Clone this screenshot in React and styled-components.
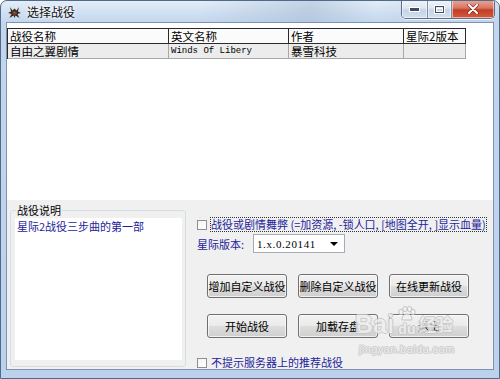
import React from "react";
import styled, { createGlobalStyle } from "styled-components";

const GlobalStyle = createGlobalStyle`
  html, body { margin: 0; padding: 0; background: #ffffff; }
  body { font-family: "Noto Sans CJK SC", "Noto Sans", sans-serif; }
  * { box-sizing: border-box; }
`;

const CJK = `"Noto Sans CJK SC", "Noto Sans", sans-serif`;

const Window = styled.div`
  position: relative;
  width: 500px;
  height: 379px;
  display: flex;
  flex-direction: column;
  border: 1px solid #4f6a8a;
  border-radius: 7px 7px 0 0;
  overflow: hidden;
  background: linear-gradient(
    180deg,
    #e4edf7 0px,
    #d3e2f3 10px,
    #c3d6ee 22px,
    #bcd1ec 100%
  );
`;

const TitleBar = styled.div`
  height: 21px;
  display: flex;
  align-items: flex-start;
  padding-left: 6px;
  background: linear-gradient(
    100deg,
    rgba(255, 255, 255, 0.0) 40%,
    rgba(160, 180, 205, 0.45) 62%,
    rgba(255, 255, 255, 0.0) 75%,
    rgba(190, 205, 225, 0.35) 85%
  );
`;

const AppIcon = styled.svg`
  margin-top: 4px;
  width: 15px;
  height: 14px;
  flex: none;
`;

const Title = styled.span`
  margin-left: 5px;
  margin-top: 3px;
  font-family: ${CJK};
  font-size: 12px;
  line-height: 16px;
  color: #111;
  text-shadow: 0 0 5px #fff, 0 0 3px #fff;
`;

const Caption = styled.div`
  margin-left: auto;
  margin-right: 4px;
  margin-top: -1px;
  display: flex;
  height: 19px;
  border: 1px solid #5a6e8a;
  border-top: none;
  border-radius: 0 0 5px 5px;
  overflow: hidden;
  box-shadow: 0 1px 0 rgba(255, 255, 255, 0.7);
`;

const CapBtn = styled.div`
  width: ${(p) => p.$w}px;
  height: 100%;
  display: flex;
  align-items: center;
  justify-content: center;
  border-left: ${(p) => (p.$first ? "none" : "1px solid #7b8ea8")};
  background: ${(p) =>
    p.$close
      ? "linear-gradient(180deg, #e9a99a 0%, #d9745f 45%, #c13f27 55%, #d35a3d 100%)"
      : "linear-gradient(180deg, #f1f5fa 0%, #dfe7f2 45%, #c6d4e6 55%, #d3e0ef 100%)"};
  box-shadow: inset 0 0 0 1px rgba(255, 255, 255, 0.55);
`;

const Client = styled.div`
  flex: 1;
  margin: 0 5px 8px 5px;
  border: 1px solid #7d93b0;
  background: #f0f0f0;
  display: flex;
  flex-direction: column;
`;

const ListView = styled.div`
  height: 177px;
  background: #ffffff;
  padding-top: 5px;
`;

const Grid = styled.div`
  display: grid;
  grid-template-columns: 161px 120px 115px 62px;
  width: max-content;
  border-left: 1px solid #2a2a2a;
  border-top: 1px solid #2a2a2a;
`;

const Cell = styled.div`
  height: 15px;
  padding: 0 2px;
  border-right: 1px solid ${(p) => (p.$head ? "#2a2a2a" : "#a8a8a8")};
  border-bottom: 1px solid ${(p) => (p.$head ? "#2a2a2a" : "#a8a8a8")};
  background: ${(p) => (p.$head ? "#fbfbfb" : "#ececec")};
  font-family: ${(p) => (p.$mono ? `"Liberation Mono", monospace` : CJK)};
  font-size: ${(p) => (p.$mono ? "9px" : "11.5px")};
  line-height: 14px;
  color: #000;
  white-space: nowrap;
`;

const Bottom = styled.div`
  flex: 1;
  display: flex;
`;

const Group = styled.fieldset`
  flex: none;
  margin: 3px 0 2px 3px;
  width: 176px;
  min-width: 0;
  padding: 1px 3px 6px 4px;
  border: 1px solid #d5dde5;
  border-radius: 3px;
  display: flex;
  flex-direction: column;
`;

const Legend = styled.legend`
  padding: 0 1px;
  margin-left: 1px;
  font-family: ${CJK};
  font-size: 11px;
  line-height: 14px;
  color: #000;
`;

const Memo = styled.div`
  flex: 1;
  background: #fff;
  padding: 1px 2px;
  font-family: ${CJK};
  font-size: 11px;
  line-height: 14px;
  color: #1c1c9a;
`;

const Side = styled.div`
  flex: 1;
  min-width: 0;
  padding-left: 11px;
  display: flex;
  flex-direction: column;
`;

const CheckRow = styled.label`
  display: flex;
  align-items: center;
  gap: 4px;
  margin-top: ${(p) => p.$top}px;
  height: 13px;
  font-family: ${CJK};
  font-size: 11px;
  line-height: 13px;
  color: #1c1c9a;
  white-space: nowrap;
`;

const Box = styled.span`
  width: 10px;
  height: 10px;
  flex: none;
  border: 1px solid #8e8f8f;
  background: linear-gradient(135deg, #f4f4f4, #ffffff);
`;

const Focus = styled.span`
  outline: 1px dotted #333;
  outline-offset: 0px;
`;

const VersionRow = styled.div`
  display: flex;
  align-items: center;
  margin-top: 3px;
  height: 19px;
`;

const Label = styled.span`
  font-family: ${CJK};
  font-size: 11px;
  color: #1c1c9a;
  width: 56px;
`;

const Combo = styled.div`
  width: 92px;
  height: 19px;
  border: 1px solid #a5acb5;
  background: #fff;
  display: flex;
  align-items: center;
  padding-left: 3px;
  font-family: "Liberation Serif", serif;
  font-size: 11px;
  letter-spacing: 0.6px;
  color: #000;
`;

const Arrow = styled.span`
  margin-left: auto;
  margin-right: 6px;
  width: 0;
  height: 0;
  border-left: 4px solid transparent;
  border-right: 4px solid transparent;
  border-top: 4px solid #000;
`;

const Buttons = styled.div`
  display: grid;
  grid-template-columns: repeat(3, 80px);
  grid-auto-rows: 24px;
  column-gap: 11px;
  row-gap: 16px;
  margin-top: 21px;
  margin-left: 10px;
`;

const Button = styled.button`
  margin: 0;
  padding: 0;
  border: 1px solid #707070;
  border-radius: 3px;
  background: linear-gradient(180deg, #f2f2f2 0%, #ebebeb 48%, #dddddd 52%, #cfcfcf 100%);
  box-shadow: inset 0 0 0 1px rgba(255, 255, 255, 0.7);
  font-family: ${CJK};
  font-size: 11px;
  white-space: nowrap;
  color: #000;
`;

const Watermark = styled.div`
  position: absolute;
  left: 354px;
  top: 294px;
  width: 120px;
  pointer-events: none;
  font-family: "Liberation Sans", sans-serif;
  color: #eeeeee;
  text-shadow: 1px 0 0 #c4c4c4, -1px 0 0 #c4c4c4, 0 1px 0 #c4c4c4, 0 -1px 0 #c4c4c4;
  opacity: 0.85;
`;

const WmTop = styled.div`
  display: flex;
  align-items: flex-end;
  height: 42px;
`;

const WmBai = styled.span`
  font-size: 25px;
  font-weight: bold;
  line-height: 26px;
`;

const WmDu = styled.span`
  display: flex;
  flex-direction: column;
  align-items: center;
  margin-left: 3px;
  font-size: 14px;
  font-weight: bold;
  line-height: 15px;
`;

const WmJy = styled.span`
  font-family: ${CJK};
  font-size: 17px;
  font-weight: bold;
  line-height: 22px;
  margin-left: 2px;
  margin-bottom: 2px;
`;

const WmUrl = styled.div`
  margin-top: 6px;
  margin-left: 4px;
  font-size: 11px;
  letter-spacing: 0.4px;
`;

export default function App() {
  return (
    <>
      <GlobalStyle />
      <Window>
        <TitleBar>
          <AppIcon viewBox="0 0 15 14">
            <path d="M3 2 L5.5 5.5 L7.5 3.5 L9.5 5.5 L12 2 L11 6.5 L14 8 L10.5 9 L12.5 13 L8.5 10.5 L7.5 13 L6.5 10.5 L2.5 13 L4.5 9 L1 8 L4 6.5 Z" fill="#3a2a20" />
            <ellipse cx="7.5" cy="8" rx="2.4" ry="2" fill="#6a3c26" />
            <circle cx="7.5" cy="7.6" r="0.8" fill="#b8643c" />
          </AppIcon>
          <Title>选择战役</Title>
          <Caption>
            <CapBtn $w={25} $first>
              <svg width="11" height="5" viewBox="0 0 11 5">
                <rect x="0.5" y="0.5" width="10" height="4" fill="#3d4c63" stroke="#fff" strokeWidth="1" />
              </svg>
            </CapBtn>
            <CapBtn $w={24}>
              <svg width="11" height="9" viewBox="0 0 11 9">
                <rect x="0.5" y="0.5" width="10" height="8" fill="none" stroke="#fff" strokeWidth="1" />
                <rect x="1.5" y="1.5" width="8" height="6" fill="none" stroke="#3d4c63" strokeWidth="1" />
                <rect x="2.5" y="3.5" width="6" height="3" fill="none" stroke="#fff" strokeWidth="1" />
              </svg>
            </CapBtn>
            <CapBtn $w={43} $close>
              <svg width="12" height="10" viewBox="0 0 12 10">
                <path d="M2 1 L10 9 M10 1 L2 9" stroke="#7a2616" strokeWidth="3.2" strokeLinecap="round" />
                <path d="M2 1 L10 9 M10 1 L2 9" stroke="#ffffff" strokeWidth="2" strokeLinecap="round" />
              </svg>
            </CapBtn>
          </Caption>
        </TitleBar>

        <Client>
          <ListView>
            <Grid>
              <Cell $head>战役名称</Cell>
              <Cell $head>英文名称</Cell>
              <Cell $head>作者</Cell>
              <Cell $head>星际2版本</Cell>
              <Cell>自由之翼剧情</Cell>
              <Cell $mono>Winds Of Libery</Cell>
              <Cell>暴雪科技</Cell>
              <Cell></Cell>
            </Grid>
          </ListView>

          <Bottom>
            <Group>
              <Legend>战役说明</Legend>
              <Memo>星际2战役三步曲的第一部</Memo>
            </Group>

            <Side>
              <CheckRow $top={18}>
                <Box />
                <Focus>战役或剧情舞弊 (=加资源, -锁人口, [地图全开, ]显示血量)</Focus>
              </CheckRow>
              <VersionRow>
                <Label>星际版本:</Label>
                <Combo>
                  1.x.0.20141
                  <Arrow />
                </Combo>
              </VersionRow>
              <Buttons>
                <Button>增加自定义战役</Button>
                <Button>删除自定义战役</Button>
                <Button>在线更新战役</Button>
                <Button>开始战役</Button>
                <Button>加载存盘</Button>
                <Button>退出</Button>
              </Buttons>
              <CheckRow $top={18}>
                <Box />
                <span>不提示服务器上的推荐战役</span>
              </CheckRow>
            </Side>
          </Bottom>
        </Client>

        <Watermark>
          <WmTop>
            <WmBai>Bai</WmBai>
            <WmDu>
              <svg width="20" height="16" viewBox="0 0 20 16">
                <g fill="#f2f2f2" stroke="#bdbdbd" strokeWidth="1">
                  <ellipse cx="4" cy="6" rx="2.2" ry="2.8" />
                  <ellipse cx="8" cy="3" rx="2.2" ry="2.6" />
                  <ellipse cx="12.5" cy="3" rx="2.2" ry="2.6" />
                  <ellipse cx="16" cy="6" rx="2.2" ry="2.8" />
                  <path d="M5 14 C5 9 8 8 10 8 C12 8 15 9 15 14 Z" />
                </g>
              </svg>
              du
            </WmDu>
            <WmJy>经验</WmJy>
          </WmTop>
          <WmUrl>jingyan.baidu.com</WmUrl>
        </Watermark>
      </Window>
    </>
  );
}
